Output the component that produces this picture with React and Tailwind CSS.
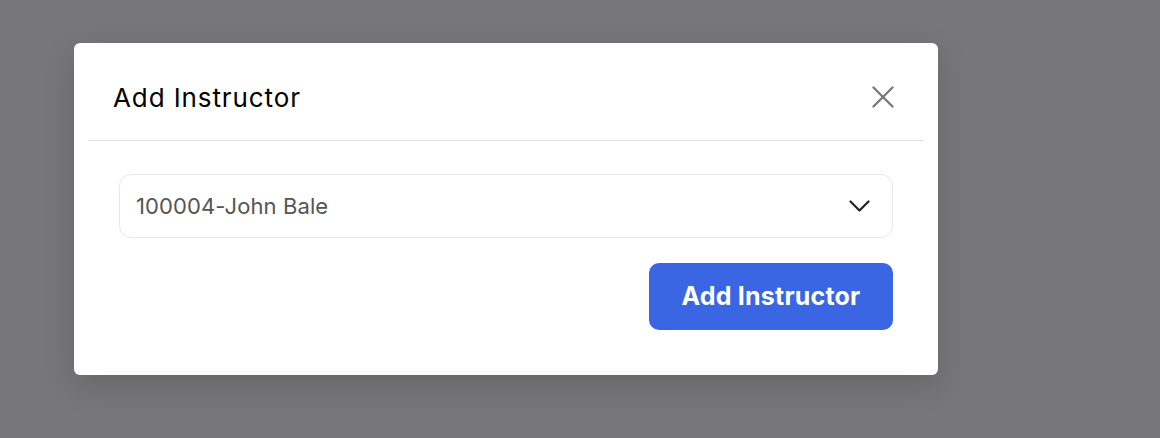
export default function App() {
  return (
    <div className="min-h-[438px] w-full bg-[#77777a] pt-[43px] pl-[74px] font-['Inter',sans-serif]">
      <div className="w-[864px] rounded-md bg-white shadow-[0_10px_30px_rgba(0,0,0,0.15)]">
        {/* Header */}
        <div className="mx-[14px] flex h-[98px] items-center justify-between border-b border-[#e2e2e4] pt-[11px] pl-[25px] pr-[30px]">
          <h2 className="text-[26px] font-normal tracking-[0.9px] text-black">Add Instructor</h2>
          <button className="text-[#777]">
            <svg width="22" height="22" viewBox="0 0 22 22" fill="none" stroke="currentColor" strokeWidth="2.3" strokeLinecap="round">
              <line x1="1.5" y1="1.5" x2="20.5" y2="20.5" />
              <line x1="20.5" y1="1.5" x2="1.5" y2="20.5" />
            </svg>
          </button>
        </div>

        {/* Body */}
        <div className="px-[45px] pt-[33px] pb-[45px]">
          <div className="flex h-[64px] items-center justify-between rounded-xl border border-[#e8e8ea] pl-[16px] pr-[22px]">
            <span className="text-[22px] tracking-[0.1px] text-[#555]">100004-John Bale</span>
            <svg width="21" height="14" viewBox="0 0 21 14" fill="none" stroke="#222" strokeWidth="2.2" strokeLinecap="round" strokeLinejoin="round">
              <polyline points="1.5,2.5 10.5,11.5 19.5,2.5" />
            </svg>
          </div>
          <div className="mt-[25px] flex justify-end">
            <button className="h-[67px] w-[244px] rounded-[10px] bg-[#3a65e3] text-[25px] font-bold tracking-[0.2px] text-white">
              Add Instructor
            </button>
          </div>
        </div>
      </div>
    </div>
  )
}
